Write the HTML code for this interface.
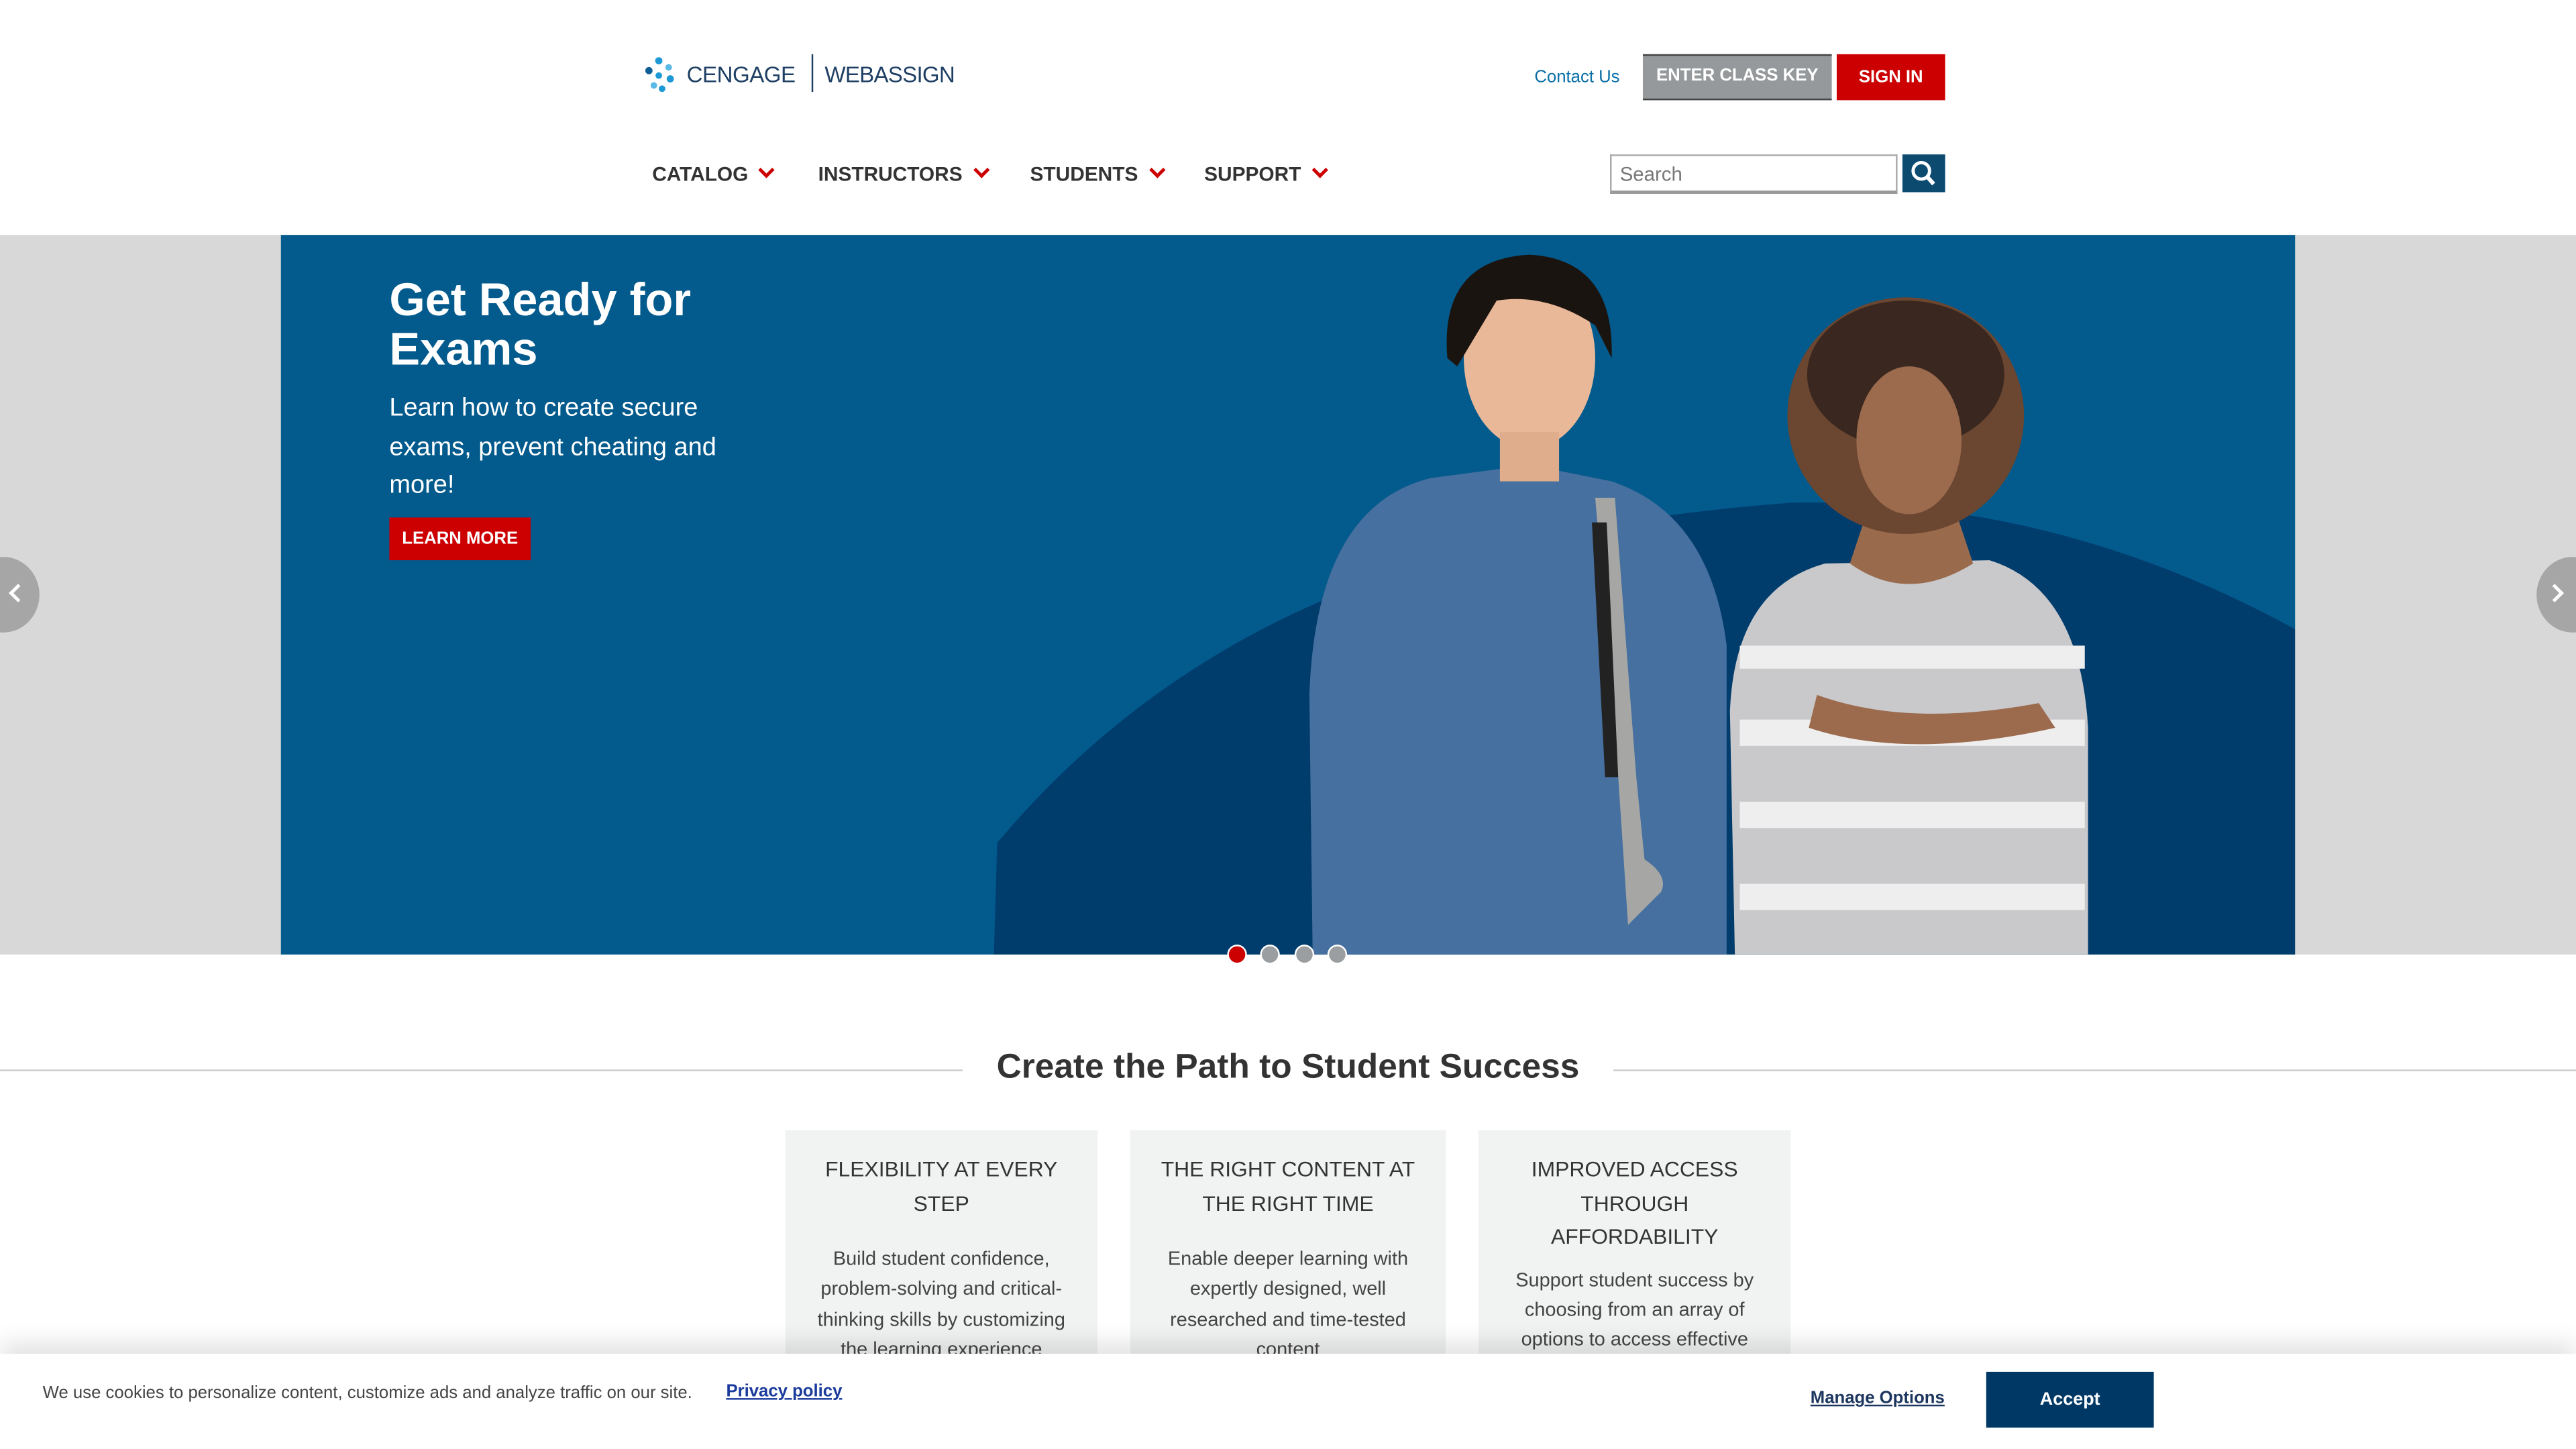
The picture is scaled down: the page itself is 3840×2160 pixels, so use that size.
<!DOCTYPE html>
<html><head><meta charset="utf-8">
<style>
*{margin:0;padding:0;box-sizing:border-box}
html,body{width:3840px;height:2160px;overflow:hidden;background:#fff}
#w{position:absolute;left:0;top:0;width:1568px;height:882px;transform:scale(2.44898);transform-origin:0 0;font-family:"Liberation Sans",sans-serif;color:#333}
.a{position:absolute}
.nav{font-weight:bold;font-size:12.2px;color:#333;top:99px}
.chev{display:inline-block;width:7px;height:7px;border-right:2px solid #c00;border-bottom:2px solid #c00;transform:rotate(45deg);margin-left:8px;position:relative;top:-3px}
.card{position:absolute;top:688px;background:#f1f2f2;height:160px;text-align:center;padding:14px 14px}
.card h3{font-weight:normal;font-size:13px;line-height:20.5px;color:#333;margin-bottom:14px}
.card p{font-size:11.8px;line-height:18.3px;color:#444}
.dot{position:absolute;top:575px;width:12px;height:12px;border-radius:50%;background:#9a9ea0;border:1.5px solid #fff}
</style></head><body><div id="w">
<svg class="a" style="left:391px;top:33px" width="24" height="24" viewBox="0 0 24 24">
<circle cx="10" cy="4" r="2.2" fill="#1d9ad6"/><circle cx="16" cy="8" r="2" fill="#5bb9e6"/><circle cx="4" cy="10" r="2.2" fill="#0e5e95"/><circle cx="10" cy="13" r="2" fill="#1d9ad6"/><circle cx="17" cy="15" r="2.2" fill="#1d9ad6"/><circle cx="7" cy="19" r="2" fill="#5bb9e6"/><circle cx="12" cy="21" r="2" fill="#1d9ad6"/>
</svg>
<div class="a" style="left:418px;top:38px;font-size:13.5px;color:#1f4064;letter-spacing:-0.2px">CENGAGE</div>
<div class="a" style="left:494px;top:33px;width:1px;height:23px;background:#1f4064"></div>
<div class="a" style="left:502px;top:38px;font-size:13.5px;color:#1f4064;letter-spacing:-0.3px">WEBASSIGN</div>
<div class="a" style="left:934px;top:41px;font-size:10.5px;color:#0b6fa8">Contact Us</div>
<div class="a" style="left:1000px;top:33px;width:115px;height:28px;background:#95999b;border:1.5px solid #444;border-left:none;border-right:none;color:#fff;font-size:10.5px;font-weight:bold;text-align:center;line-height:25px">ENTER CLASS KEY</div>
<div class="a" style="left:1118px;top:33px;width:66px;height:28px;background:#c00;color:#fff;font-size:10.5px;font-weight:bold;text-align:center;line-height:28px">SIGN IN</div>
<div class="a nav" style="left:397px">CATALOG<span class="chev"></span></div>
<div class="a nav" style="left:498px">INSTRUCTORS<span class="chev"></span></div>
<div class="a nav" style="left:627px">STUDENTS<span class="chev"></span></div>
<div class="a nav" style="left:733px">SUPPORT<span class="chev"></span></div>
<div class="a" style="left:980px;top:94px;width:175px;height:24px;border:1px solid #aaa;border-bottom:2px solid #999;font-size:12px;color:#777;padding:4px 5px">Search</div>
<div class="a" style="left:1158px;top:94px;width:26px;height:23px;background:#0c4a70">
<svg width="26" height="23"><circle cx="11.5" cy="10" r="5" fill="none" stroke="#fff" stroke-width="2"/><line x1="15" y1="13.5" x2="19" y2="18" stroke="#fff" stroke-width="2.5"/></svg></div>
<div class="a" style="left:0;top:143px;width:1568px;height:438px;background:#d8d8d8"></div>
<div class="a" style="left:171px;top:143px;width:1226px;height:438px;background:#035a8c;overflow:hidden">
<svg width="1226" height="438" style="position:absolute;left:0;top:0">
<path d="M434 438 L436 370 Q520 270 640 220 Q760 175 920 163 Q1080 160 1226 240 L1226 438 Z" fill="#003c6c"/>
<path d="M628 438 L626 280 Q630 165 700 148 L760 140 L810 150 Q870 170 880 250 L880 438 Z" fill="#46709f"/>
<path d="M800 160 L812 160 L825 330 L830 380 Q845 390 840 400 L820 420 L812 300 Z" fill="#a6a7a4"/>
<path d="M798 175 L807 175 L814 330 L806 330 Z" fill="#222"/>
<ellipse cx="760" cy="75" rx="40" ry="55" fill="#e8b899"/>
<path d="M710 75 Q705 15 760 12 Q812 15 810 75 L800 55 Q770 35 740 40 L716 80 Z" fill="#1a1410"/>
<rect x="742" y="120" width="36" height="30" fill="#e0ad8c"/>
<path d="M885 438 L882 290 Q885 215 940 200 L1040 198 Q1095 215 1100 300 L1100 438 Z" fill="#c9c8cb"/>
<rect x="888" y="250" width="210" height="14" fill="#eeeeee"/>
<rect x="888" y="295" width="210" height="16" fill="#eeeeee"/>
<rect x="888" y="345" width="210" height="16" fill="#eeeeee"/>
<rect x="888" y="395" width="210" height="16" fill="#eeeeee"/>
<path d="M955 200 Q990 225 1030 200 L1020 170 L965 170 Z" fill="#9a6a4c"/>
<ellipse cx="989" cy="110" rx="72" ry="72" fill="#6b4630"/>
<ellipse cx="989" cy="85" rx="60" ry="45" fill="#3a2820"/>
<ellipse cx="991" cy="125" rx="32" ry="45" fill="#9c6b4e"/>
<path d="M935 280 Q990 300 1070 285 L1080 300 Q990 320 930 300 Z" fill="#9c6b4e"/>
</svg>
<div class="a" style="left:66px;top:25px;color:#fff;font-weight:bold;font-size:28px;line-height:30px;width:260px">Get Ready for Exams</div>
<div class="a" style="left:66px;top:94px;color:#fff;font-size:15.5px;line-height:23.5px;width:230px">Learn how to create secure exams, prevent cheating and more!</div>
<div class="a" style="left:66px;top:172px;width:86px;height:26px;background:#c00;color:#fff;font-size:10.5px;font-weight:bold;text-align:center;line-height:26px">LEARN MORE</div>
</div>
<div class="a" style="left:-20px;top:339px;width:44px;height:46px;border-radius:50%;background:#a6a6a6"></div>
<div class="a" style="left:7px;top:357px;width:8px;height:8px;border-left:2px solid #fff;border-bottom:2px solid #fff;transform:rotate(45deg)"></div>
<div class="a" style="left:1544px;top:339px;width:44px;height:46px;border-radius:50%;background:#a6a6a6"></div>
<div class="a" style="left:1551px;top:357px;width:8px;height:8px;border-right:2px solid #fff;border-top:2px solid #fff;transform:rotate(45deg)"></div>
<div class="dot" style="left:747px;background:#c00"></div>
<div class="dot" style="left:767px"></div>
<div class="dot" style="left:788px"></div>
<div class="dot" style="left:808px"></div>
<div class="a" style="left:0;top:651px;width:586px;height:1px;background:#ccc"></div>
<div class="a" style="left:982px;top:651px;width:586px;height:1px;background:#ccc"></div>
<div class="a" style="left:586px;top:638px;width:396px;text-align:center;font-size:21px;font-weight:bold;color:#333">Create the Path to Student Success</div>
<div class="card" style="left:478px;width:190px"><h3>FLEXIBILITY AT EVERY STEP</h3><p>Build student confidence, problem-solving and critical-thinking skills by customizing the learning experience</p></div>
<div class="card" style="left:688px;width:192px"><h3>THE RIGHT CONTENT AT THE RIGHT TIME</h3><p>Enable deeper learning with expertly designed, well researched and time-tested content</p></div>
<div class="card" style="left:900px;width:190px"><h3 style="margin-bottom:6px">IMPROVED ACCESS THROUGH AFFORDABILITY</h3><p>Support student success by choosing from an array of options to access effective</p></div>
<div class="a" style="left:0;top:824px;width:1568px;height:58px;background:#fff;box-shadow:0 -6px 14px rgba(0,0,0,0.12)"></div>
<div class="a" style="left:26px;top:842px;font-size:10.5px;color:#444">We use cookies to personalize content, customize ads and analyze traffic on our site.</div>
<div class="a" style="left:442px;top:841px;font-size:10.5px;font-weight:bold;color:#1a3a9c;text-decoration:underline">Privacy policy</div>
<div class="a" style="left:1102px;top:845px;font-size:10.5px;font-weight:bold;color:#1c355e;text-decoration:underline">Manage Options</div>
<div class="a" style="left:1209px;top:835px;width:102px;height:34px;background:#003865;color:#fff;font-size:11px;font-weight:bold;text-align:center;line-height:34px">Accept</div>
</div></body></html>
